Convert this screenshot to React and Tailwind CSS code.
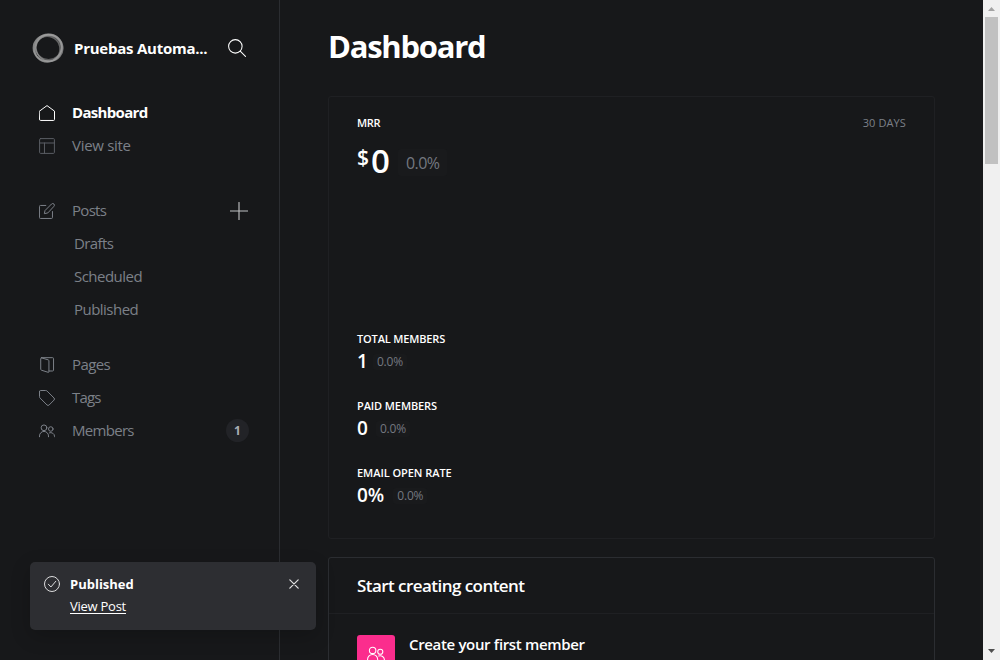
const STROKE = {
  fill: "none",
  stroke: "currentColor",
  strokeLinecap: "round",
  strokeLinejoin: "round",
};

function Icon({ size = 16, width = 1.5, box = 24, className = "", children }) {
  return (
    <svg
      width={size}
      height={size}
      viewBox={`0 0 ${box} ${box}`}
      strokeWidth={width}
      className={`block shrink-0 ${className}`}
      {...STROKE}
    >
      {children}
    </svg>
  );
}

const MembersPaths = () => (
  <>
    <circle cx="7.5" cy="7.2" r="4.3" />
    <path d="M.75 20.6v-1.2a6.75 6.75 0 0 1 13.5 0v1.2" />
    <circle cx="17.7" cy="9" r="3.4" />
    <path d="M15.6 14.7a5.6 5.6 0 0 1 7.65 5.3v.6" />
  </>
);

const icons = {
  home: <path d="M.75 9.200 12 .9l11.250 8.300v12.500a1.500 1.500 0 0 1-1.500 1.500H2.250a1.500 1.500 0 0 1-1.500-1.500z" />,
  site: (
    <>
      <rect x=".9" y=".9" width="22.2" height="22.2" rx="1.5" />
      <path d="M.9 7.5h22.2M8.2 7.5v15.6" />
    </>
  ),
  posts: (
    <>
      <path d="M20.2 12.8v8.9a1.5 1.5 0 0 1-1.5 1.5h-16.5a1.5 1.5 0 0 1-1.5-1.5v-16.5a1.5 1.5 0 0 1 1.5-1.5h8" />
      <path d="m12.7 15-4.7 1 1-4.7L18.8 1.5a2.4 2.4 0 0 1 3.6 3.6z" />
    </>
  ),
  pages: (
    <>
      <path d="m3.5 1.2 10.4 3.1a1.5 1.5 0 0 1 1 1.4v16.2a1 1 0 0 1-1.3 1l-10-3.1a1.5 1.5 0 0 1-1-1.4V2.4A1.3 1.3 0 0 1 3.5 1.2z" />
      <path d="M4 1h16.300A1.500 1.500 0 0 1 21.800 2.500v17a1.500 1.500 0 0 1-1.500 1.500H15" />
    </>
  ),
  tags: (
    <path d="M.75 2.3V10a3 3 0 0 0 .9 2.1l10.4 10.4a2.2 2.2 0 0 0 3.1 0l7.4-7.4a2.2 2.2 0 0 0 0-3.1L12.1 1.6a3 3 0 0 0-2.1-.85H2.3A1.5 1.5 0 0 0 .75 2.3z" />
  ),
  members: <MembersPaths />,
};

function NavItem({ icon, label, active, tone, children, track }) {
  return (
    <li
      className={`flex h-[33px] items-center pl-[39px] pr-[30px] ${active ? "font-bold text-white" : "text-[#7c8088]"}`}
    >
      <Icon className={`mr-[17px] ${tone}`}>{icons[icon]}</Icon>
      <span className={track}>{label}</span>
      {children}
    </li>
  );
}

function SubItem({ label, track }) {
  return (
    <li className="flex h-[33px] items-center pl-[74px] text-[#7c8088]">
      <span className={track}>{label}</span>
    </li>
  );
}

function Logo() {
  return (
    <svg width="32" height="32" viewBox="0 0 32 32" fill="none" className="block shrink-0">
      <ellipse cx="15.500" cy="16" rx="14" ry="13.200" stroke="#a8a8a8" strokeOpacity=".75" strokeWidth="1.800" />
      <ellipse cx="17" cy="15" rx="13.600" ry="13.200" stroke="#b5b5b5" strokeOpacity=".6" strokeWidth="1.500" transform="rotate(40 16 16)" />
      <ellipse cx="16" cy="16.600" rx="14.200" ry="12.800" stroke="#a0a0a0" strokeOpacity=".6" strokeWidth="1.600" transform="rotate(-45 16 16)" />
      <circle cx="15.200" cy="17" r="12.800" stroke="#9a9a9a" strokeOpacity=".6" strokeWidth="1.500" />
      <ellipse cx="16.500" cy="14.800" rx="13.200" ry="12.800" stroke="#999" strokeOpacity=".55" strokeWidth="1.400" />
    </svg>
  );
}

function Sidebar() {
  return (
    <aside className="flex w-[280px] shrink-0 flex-col border-r border-[#2b2d31] pt-8 text-[15px]">
      <header className="flex h-8 items-center pl-8 pr-[33px]">
        <Logo />
        <span className="ml-[10px] whitespace-nowrap text-[15px] font-bold tracking-[-0.24px] text-white">
          Pruebas Automa...
        </span>
        <Icon size={18} width={1.4} className="ml-auto text-white">
          <circle cx="9.8" cy="9.8" r="9" />
          <path d="m16.3 16.3 7 7" />
        </Icon>
      </header>
      <ul className="mt-8">
        <NavItem icon="home" label="Dashboard" active tone="text-white" track="tracking-[-0.68px]" />
        <NavItem icon="site" label="View site" tone="text-[#5a5d64]" track="tracking-[-0.3px]" />
      </ul>
      <ul className="mt-8">
        <NavItem icon="posts" label="Posts" tone="text-[#7c8088]" track="tracking-[-0.7px]">
          <Icon size={18} width={1.5} className="ml-auto mr-px text-[#c0c1c3]">
            <path d="M12 .5v23M.5 12h23" />
          </Icon>
        </NavItem>
        <SubItem label="Drafts" track="tracking-[-0.6px]" />
        <SubItem label="Scheduled" track="tracking-[-0.52px]" />
        <SubItem label="Published" track="tracking-[-0.52px]" />
      </ul>
      <ul className="mt-[22px]">
        <NavItem icon="pages" label="Pages" tone="text-[#7c8088]" track="tracking-[-0.6px]" />
        <NavItem icon="tags" label="Tags" tone="text-[#7c8088]" track="tracking-[-0.8px]" />
        <NavItem icon="members" label="Members" tone="text-[#7c8088]" track="tracking-[-0.7px]">
          <span className="ml-auto flex size-[23px] items-center justify-center rounded-full bg-[#222327] text-[12px] font-bold text-[#a9adb4]">
            1
          </span>
        </NavItem>
      </ul>
    </aside>
  );
}

function Stat({ label, value, track, gap }) {
  return (
    <div className="h-[67px]">
      <div className={`text-[11px] font-semibold leading-4 text-white ${track}`}>{label}</div>
      <div className="mt-[3px] flex h-6 items-center">
        <span className="-mt-[2px] text-[19px] font-semibold leading-6 text-white">{value}</span>
        <span
          className={`flex h-4 items-center rounded-[3px] bg-[#191a1c] px-1 text-[12px] font-medium tracking-[-0.2px] text-[#747880] ${gap}`}
        >
          0.0%
        </span>
      </div>
    </div>
  );
}

function Main() {
  return (
    <main className="flex min-w-0 flex-1 flex-col overflow-hidden pl-12 pr-12">
      <h1 className="mt-[26px] h-10 text-[31px] font-bold leading-10 tracking-[-1.25px] text-white">Dashboard</h1>
      <section className="mt-[30px] h-[443px] w-[607px] shrink-0 rounded-[3px] border border-[#1f2023] pl-7 pr-7 pt-[18px]">
        <div className="flex h-4 items-center justify-between text-[11px] leading-4">
          <span className="font-semibold tracking-[-0.3px] text-white">MRR</span>
          <span className="font-medium tracking-[0.1px] text-[#7c8088]">30 DAYS</span>
        </div>
        <div className="mt-[10px] flex h-10 items-center text-white">
          <span className="-mt-[8px] w-[12px] text-[21px] font-semibold leading-6 tracking-[-0.3px]">$</span>
          <span className="ml-[2px] text-[33px] font-semibold leading-10">0</span>
          <span className="ml-2 mt-[3px] flex h-[27px] items-center rounded-[3px] bg-[#191a1c] px-2 text-[16px] font-medium tracking-[-0.55px] text-[#747880]">
            0.0%
          </span>
        </div>
        <div className="mt-[150px]">
          <Stat label="TOTAL MEMBERS" value="1" track="tracking-[-0.15px]" gap="ml-[5px]" />
          <Stat label="PAID MEMBERS" value="0" track="tracking-[-0.1px]" gap="ml-2" />
          <Stat label="EMAIL OPEN RATE" value="0%" track="tracking-[-0.05px]" gap="ml-[9px]" />
        </div>
      </section>
      <section className="mt-[18px] h-[300px] w-[607px] shrink-0 rounded-[3px] border border-[#2b2d31]">
        <h2 className="flex h-14 items-center border-b border-[#1f2023] px-7 text-[17px] font-semibold tracking-[-0.55px] text-white">
          Start creating content
        </h2>
        <div className="flex pl-7 pt-[21px]">
          <div className="flex size-[38px] items-center justify-center rounded-[3px] bg-[#fb2d8d] text-white">
            <Icon size={18} width={1.4}>
              <MembersPaths />
            </Icon>
          </div>
          <span className="-mt-px ml-[14px] text-[15px] font-semibold leading-5 tracking-[-0.34px] text-white">
            Create your first member
          </span>
        </div>
      </section>
    </main>
  );
}

function Scrollbar() {
  return (
    <div className="flex w-[17px] shrink-0 flex-col items-center justify-between bg-[#f0f0f0] text-[#505050]">
      <div className="flex flex-col items-center">
        <svg width="17" height="17" viewBox="0 0 17 17" className="block" fill="#a3a3a3">
          <path d="M5 11h7L8.500 7z" />
        </svg>
        <div className="h-[147px] w-[13px] bg-[#c1c1c1]" />
      </div>
      <svg width="17" height="17" viewBox="0 0 17 17" className="block" fill="currentColor">
        <path d="M5 6h7L8.500 10z" />
      </svg>
    </div>
  );
}

function Toast() {
  return (
    <div className="absolute left-[30px] top-[562px] flex h-[68px] w-[286px] rounded-[5px] bg-[#2d2e32] pl-[14px] pr-[17px] pt-3 text-[13px] text-white shadow-[0_6px_20px_rgba(0,0,0,0.2)]">
      <Icon className="mt-[2px] text-[#dcdcdd]">
        <circle cx="12" cy="12" r="11.25" />
        <path d="m6.5 12.3 3.9 4.2 7.3-8.6" />
      </Icon>
      <div className="ml-[10px] flex flex-col items-start">
        <span className="font-bold leading-5">Published</span>
        <span className="mt-[2px] font-medium leading-5 tracking-[-0.25px] underline underline-offset-2">
          View Post
        </span>
      </div>
      <Icon size={10} width={2.9} className="ml-auto mt-[5px] text-[#e2e2e3]">
        <path d="m2 2 20 20M22 2 2 22" />
      </Icon>
    </div>
  );
}

export default function App() {
  return (
    <div className="relative flex h-[660px] w-[1000px] overflow-hidden bg-[#17181a] font-['Open_Sans','Noto_Sans',sans-serif]">
      <Sidebar />
      <Main />
      <Scrollbar />
      <Toast />
    </div>
  );
}
